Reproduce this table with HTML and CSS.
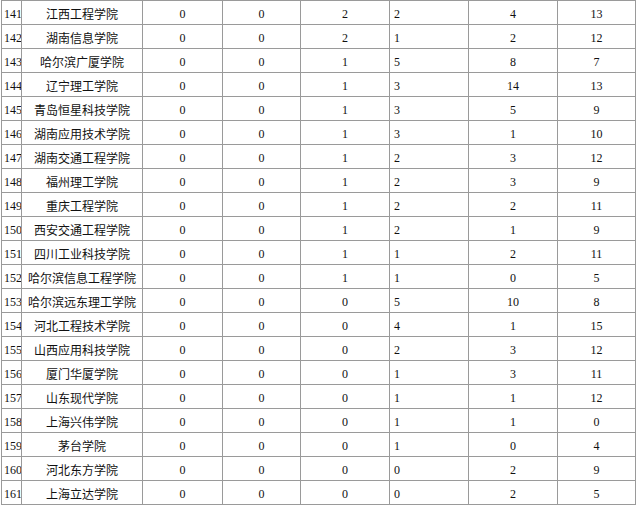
FILE: index.html
```html
<!DOCTYPE html>
<html lang="zh">
<head>
<meta charset="utf-8">
<title>表</title>
<link rel="stylesheet" href="styles.css">
</head>
<body>
<table class="grid">
<colgroup>
<col class="c1"><col class="c2"><col class="c3"><col class="c4"><col class="c5"><col class="c6"><col class="c7"><col class="c8">
</colgroup>
<tbody>
<tr><td class="no">141</td><td class="name">江西工程学院</td><td>0</td><td>0</td><td>2</td><td class="left">2</td><td>4</td><td>13</td></tr>
<tr><td class="no">142</td><td class="name">湖南信息学院</td><td>0</td><td>0</td><td>2</td><td class="left">1</td><td>2</td><td>12</td></tr>
<tr><td class="no">143</td><td class="name">哈尔滨广厦学院</td><td>0</td><td>0</td><td>1</td><td class="left">5</td><td>8</td><td>7</td></tr>
<tr><td class="no">144</td><td class="name">辽宁理工学院</td><td>0</td><td>0</td><td>1</td><td class="left">3</td><td>14</td><td>13</td></tr>
<tr><td class="no">145</td><td class="name">青岛恒星科技学院</td><td>0</td><td>0</td><td>1</td><td class="left">3</td><td>5</td><td>9</td></tr>
<tr><td class="no">146</td><td class="name">湖南应用技术学院</td><td>0</td><td>0</td><td>1</td><td class="left">3</td><td>1</td><td>10</td></tr>
<tr><td class="no">147</td><td class="name">湖南交通工程学院</td><td>0</td><td>0</td><td>1</td><td class="left">2</td><td>3</td><td>12</td></tr>
<tr><td class="no">148</td><td class="name">福州理工学院</td><td>0</td><td>0</td><td>1</td><td class="left">2</td><td>3</td><td>9</td></tr>
<tr><td class="no">149</td><td class="name">重庆工程学院</td><td>0</td><td>0</td><td>1</td><td class="left">2</td><td>2</td><td>11</td></tr>
<tr><td class="no">150</td><td class="name">西安交通工程学院</td><td>0</td><td>0</td><td>1</td><td class="left">2</td><td>1</td><td>9</td></tr>
<tr><td class="no">151</td><td class="name">四川工业科技学院</td><td>0</td><td>0</td><td>1</td><td class="left">1</td><td>2</td><td>11</td></tr>
<tr><td class="no">152</td><td class="name">哈尔滨信息工程学院</td><td>0</td><td>0</td><td>1</td><td class="left">1</td><td>0</td><td>5</td></tr>
<tr><td class="no">153</td><td class="name">哈尔滨远东理工学院</td><td>0</td><td>0</td><td>0</td><td class="left">5</td><td>10</td><td>8</td></tr>
<tr><td class="no">154</td><td class="name">河北工程技术学院</td><td>0</td><td>0</td><td>0</td><td class="left">4</td><td>1</td><td>15</td></tr>
<tr><td class="no">155</td><td class="name">山西应用科技学院</td><td>0</td><td>0</td><td>0</td><td class="left">2</td><td>3</td><td>12</td></tr>
<tr><td class="no">156</td><td class="name">厦门华厦学院</td><td>0</td><td>0</td><td>0</td><td class="left">1</td><td>3</td><td>11</td></tr>
<tr><td class="no">157</td><td class="name">山东现代学院</td><td>0</td><td>0</td><td>0</td><td class="left">1</td><td>1</td><td>12</td></tr>
<tr><td class="no">158</td><td class="name">上海兴伟学院</td><td>0</td><td>0</td><td>0</td><td class="left">1</td><td>1</td><td>0</td></tr>
<tr><td class="no">159</td><td class="name">茅台学院</td><td>0</td><td>0</td><td>0</td><td class="left">1</td><td>0</td><td>4</td></tr>
<tr><td class="no">160</td><td class="name">河北东方学院</td><td>0</td><td>0</td><td>0</td><td class="left">0</td><td>2</td><td>9</td></tr>
<tr><td class="no">161</td><td class="name">上海立达学院</td><td>0</td><td>0</td><td>0</td><td class="left">0</td><td>2</td><td>5</td></tr>
</tbody>
</table>
</body>
</html>
```
FILE: styles.css
```css
html, body {
  margin: 0;
  padding: 0;
  background: #ffffff;
}
body {
  padding-left: 1px;
}
.grid {
  border-collapse: collapse;
  table-layout: fixed;
  width: 634px;
  font-family: "Liberation Serif", "Noto Sans CJK SC", serif;
  font-size: 12px;
  color: #111;
}
.c1 { width: 20px; }
.c2 { width: 121px; }
.c3 { width: 80px; }
.c4 { width: 78px; }
.c5 { width: 89px; }
.c6 { width: 79px; }
.c7 { width: 89px; }
.c8 { width: 78px; }
.grid td {
  border: 1px solid #9a9a9a;
  height: 21px;
  padding: 0 0 2px 0;
  text-align: center;
  vertical-align: bottom;
  line-height: 16px;
  white-space: nowrap;
  overflow: hidden;
}
.grid td.no {
  text-align: left;
  padding-left: 2px;
}
.grid td.left {
  text-align: left;
  padding-left: 4px;
}
.grid td.name {
  font-family: "Noto Sans CJK SC", sans-serif;
}
```
